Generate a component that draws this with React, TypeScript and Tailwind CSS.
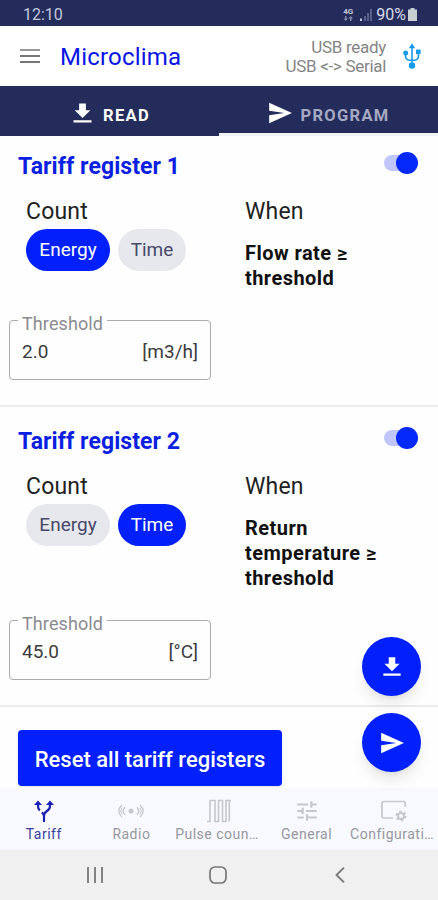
import { useState, type ReactNode } from "react";
import { clsx } from "clsx";

interface Register {
  id: number;
  count: "Energy" | "Time";
  condition: string;
  threshold: string;
  unit: string;
  enabled: boolean;
}

const initialRegisters: Register[] = [
  { id: 1, count: "Energy", condition: "Flow rate ≥ threshold", threshold: "2.0", unit: "[m3/h]", enabled: true },
  { id: 2, count: "Time", condition: "Return temperature ≥ threshold", threshold: "45.0", unit: "[°C]", enabled: true },
];

const DownloadIcon = ({ className }: { className?: string }) => (
  <svg viewBox="0 0 24 24" fill="currentColor" className={className}>
    <path d="M19 9h-4V3H9v6H5l7 7 7-7zM4 18v2h16v-2H4z" />
  </svg>
);

const SendIcon = ({ className }: { className?: string }) => (
  <svg viewBox="0 0 24 24" fill="currentColor" className={className}>
    <path d="M2 21.500l21-9.500L2 2.500v7.500l14 2-14 2v7.500z" />
  </svg>
);

const UsbIcon = () => (
  <svg viewBox="0 0 18 26" className="h-[26px] w-[18px] shrink-0 text-[#159bea]" fill="none" stroke="currentColor" strokeWidth="1.600">
    <path d="M9 4v18M2.500 10v2.500Q2.500 17 6.500 17.300H11.500q4-.3 4-4.800V9" />
    <path d="M9 .3l3.200 5H5.800z" fill="currentColor" stroke="none" />
    <circle cx="9" cy="22.500" r="3.200" fill="currentColor" stroke="none" />
    <circle cx="2.700" cy="10" r="2.500" fill="currentColor" stroke="none" />
    <path d="M13 6.500h4.600v4.500H13z" fill="currentColor" stroke="none" />
  </svg>
);

const TariffIcon = () => (
  <svg viewBox="0 0 20 24" className="h-6 w-5" fill="none" stroke="currentColor" strokeWidth="2.200">
    <path d="M10 23v-6.500q0-2.500 3-4.500t3-5V4M10 17q0-2-2.200-3.700M5.800 11.500Q4 9.700 4 7V4" />
    <path d="M4 1.500L8 6H0zM16 1.500L20 6h-8z" fill="currentColor" stroke="none" />
  </svg>
);

const RadioIcon = () => (
  <svg viewBox="0 0 26 14" className="h-3.5 w-[26px]" fill="none" stroke="currentColor" strokeWidth="1.300">
    <path d="M4 1Q-2.500 7 4 13M7 3.300Q3.500 7 7 10.700M22 1q6.500 6 0 12M19 3.300q3.500 3.700 0 7.400" />
    <path d="M4 3.500Q1.500 7 4 10.500M22 3.500q2.500 3.500 0 7" strokeWidth="1" />
    <circle cx="13" cy="7" r="2.500" fill="currentColor" stroke="none" />
  </svg>
);

const PulseIcon = () => (
  <svg viewBox="0 0 24 24" className="h-6 w-6" fill="none" stroke="currentColor" strokeWidth="1.600">
    <path d="M0 22.500h3V1.500h5v21h3.500V1.500h4v21h3.500V1.500h5" />
    <path d="M22.300 1.500v21" />
  </svg>
);

const TuneIcon = () => (
  <svg viewBox="0 0 24 24" className="h-[26px] w-[26px]" fill="currentColor">
    <path d="M3 17v2h6v-2H3zM3 5v2h10V5H3zm10 16v-2h8v-2h-8v-2h-2v6h2zM7 9v2H3v2h4v2h2V9H7zm14 4v-2H11v2h10zm-6-4h2V7h4V5h-4V3h-2v6z" />
  </svg>
);

const ConfigIcon = () => (
  <svg viewBox="0 0 26 22" className="h-[22px] w-[26px]" fill="none" stroke="currentColor" strokeWidth="1.700">
    <path d="M24.200 7V3q0-1.500-1.500-1.500H2.500Q1 1.500 1 3v13.500Q1 18 2.500 18H12" />
    <circle cx="20" cy="16" r="3" strokeWidth="2" />
    <circle cx="20" cy="16" r="4.600" strokeWidth="1.800" strokeDasharray="2.400 2.417" />
  </svg>
);

const navItems: { label: string; icon: ReactNode }[] = [
  { label: "Tariff", icon: <TariffIcon /> },
  { label: "Radio", icon: <RadioIcon /> },
  { label: "Pulse coun…", icon: <PulseIcon /> },
  { label: "General", icon: <TuneIcon /> },
  { label: "Configurati…", icon: <ConfigIcon /> },
];

function Toggle({ on, onClick }: { on: boolean; onClick: () => void }) {
  return (
    <button onClick={onClick} className={clsx("flex h-[22px] w-[34px] items-center", on ? "justify-end" : "justify-start")}>
      <span className={clsx("h-4 w-[30px] rounded-full", on ? "bg-[#c0c6fa]" : "bg-gray-300")} />
      <span className={clsx("h-[22px] w-[22px] shrink-0 rounded-full", on ? "-ml-[18px] bg-[#0429fa]" : "-ml-[30px] bg-gray-100")} />
    </button>
  );
}

function Chip({ label, active, onClick }: { label: string; active: boolean; onClick: () => void }) {
  return (
    <button
      onClick={onClick}
      className={clsx(
        "flex h-[42px] items-center justify-center rounded-full text-[19px]",
        label === "Energy" ? "w-[84px]" : "w-[68px]",
        active ? "bg-[#0120fc] text-white" : "bg-[#e7e8ee] text-[#474869]"
      )}
    >
      {label}
    </button>
  );
}

function RegisterSection({ register, onChange }: { register: Register; onChange: (r: Register) => void }) {
  return (
    <section
      className={clsx(
        "flex shrink-0 flex-col border-b-2 border-[#ececec]",
        register.id === 1 ? "h-[271px] pt-4" : "h-[300px] pt-5"
      )}
    >
      <div className="flex items-start justify-between pr-5 pl-[18px]">
        <h2 className="pt-px text-[23px] leading-7 font-bold tracking-[0.080px] text-[#0a1fe0]">Tariff register {register.id}</h2>
        <Toggle on={register.enabled} onClick={() => onChange({ ...register, enabled: !register.enabled })} />
      </div>
      <div className="mt-[15px] flex">
        <div className="w-[219px] pl-[26px]">
          <div className="text-[23px] leading-8 tracking-[0.200px] text-[#222]">Count</div>
          <div className="mt-px flex gap-2">
            {(["Energy", "Time"] as const).map((c) => (
              <Chip key={c} label={c} active={register.count === c} onClick={() => onChange({ ...register, count: c })} />
            ))}
          </div>
        </div>
        <div className="flex-1 pr-12 pl-[26px]">
          <div className="text-[23px] leading-8 tracking-[0.200px] text-[#222]">When</div>
          <p className="mt-[13px] text-[20px] leading-[25px] font-bold tracking-[0.450px] text-[#111]">{register.condition}</p>
        </div>
      </div>
      <fieldset className="mt-auto mb-[25px] ml-[9px] h-[69px] w-[202px] rounded-[4px] border-[1.500px] border-[#aaa] pr-3 pl-2">
        <legend className="px-1 text-[18px] leading-[18px] tracking-[0.100px] text-[#8b8b90]">
          <span className="relative top-1">Threshold</span>
        </legend>
        <div className="flex justify-between pt-1 pl-1 text-[19px] leading-[38px] text-[#3c3c3c]">
          <span>{register.threshold}</span>
          <span>{register.unit}</span>
        </div>
      </fieldset>
    </section>
  );
}

export default function App() {
  const [registers, setRegisters] = useState(initialRegisters);
  const [activeNav, setActiveNav] = useState("Tariff");

  const updateRegister = (next: Register) => setRegisters(registers.map((r) => (r.id === next.id ? next : r)));

  return (
    <div className="relative flex h-[900px] w-[438px] flex-col overflow-hidden bg-[#fefefe] font-[Roboto,sans-serif]">
      {/* Status bar */}
      <div className="flex h-[26px] shrink-0 items-center justify-between bg-[#242c5c] pt-[3px] pr-[21px] pl-[23px] text-[16px] text-[#c3c7dc]">
        <span>12:10</span>
        <div className="flex items-center gap-1">
          <div className="mr-0.5 flex w-3 flex-col items-center text-[8px] leading-[8px] font-bold">
            <span>4G</span>
            <svg viewBox="0 0 10 5" className="h-[5px] w-2.5" fill="#858aaa">
              <path d="M2 0h1.500v2.500H5L2.700 5 .5 2.500H2zM7 5h1.500V2.500H10L7.700 0 5.500 2.500H7z" />
            </svg>
          </div>
          <svg viewBox="0 0 12 12" className="h-3 w-3">
            <path d="M0 9.500h2V12H0z" fill="#c3c7dc" />
            <path d="M4 7h2v5H4zM7 4h2v8H7zM10 0h2v12h-2z" fill="#5a6087" />
          </svg>
          <span className="text-[#d8dbea]">90%</span>
          <svg viewBox="0 0 9 13" className="-ml-0.5 h-[13px] w-[9px]" fill="#c9d0d2">
            <path d="M2.500 0h4v1.500H9V13H0V1.500h2.500z" />
          </svg>
        </div>
      </div>

      {/* Header */}
      <header className="flex h-[60px] shrink-0 items-center bg-white pr-[17px] pl-5">
        <button className="flex w-5 flex-col gap-1">
          <span className="h-0.5 bg-[#999]" />
          <span className="h-0.5 bg-[#777]" />
          <span className="h-0.5 bg-[#777]" />
        </button>
        <h1 className="ml-5 pt-0.5 text-[24px] tracking-[0.200px] text-[#0a16e2]">Microclima</h1>
        <div className="mr-[17px] ml-auto pt-0.5 text-right text-[17px] leading-[19px] tracking-[-0.300px] text-[#858585]">
          <div>USB ready</div>
          <div>USB &lt;-&gt; Serial</div>
        </div>
        <UsbIcon />
      </header>

      {/* Actions */}
      <div className="flex h-[50px] shrink-0 bg-[#242c5c] text-[16.500px] font-bold tracking-[1.300px]">
        <button className="flex w-[219px] items-center justify-center pt-2.5 text-white">
          <DownloadIcon className="-mt-1.5 mr-[7px] h-[27px] w-[27px]" />
          READ
        </button>
        <button className="flex w-[219px] items-center justify-center border-b-[3px] border-[#f3f3f6] pt-[13px] text-[#a5a9c2]">
          <SendIcon className="-mt-1.5 mr-[7px] h-[26px] w-[26px] text-white" />
          PROGRAM
        </button>
      </div>

      {/* Registers */}
      <main className="flex min-h-0 flex-1 flex-col">
        {registers.map((r) => (
          <RegisterSection key={r.id} register={r} onChange={updateRegister} />
        ))}
        <button
          onClick={() => setRegisters(initialRegisters)}
          className="mt-[23px] ml-[18px] h-14 w-[264px] shrink-0 rounded-[4px] bg-[#0120fc] pt-0.5 text-[22px] font-medium text-white shadow"
        >
          Reset all tariff registers
        </button>
      </main>

      {/* Floating actions */}
      <div className="absolute top-[637px] right-[17px] flex flex-col gap-[17px] text-white">
        <button className="flex h-[59px] w-[59px] items-center justify-center rounded-full bg-[#0120fc] shadow-lg">
          <DownloadIcon className="h-[26px] w-[26px]" />
        </button>
        <button className="flex h-[59px] w-[59px] items-center justify-center rounded-full bg-[#0120fc] shadow-lg">
          <SendIcon className="h-[26px] w-[26px]" />
        </button>
      </div>

      {/* Bottom navigation */}
      <nav className="flex h-[62px] shrink-0 bg-[#f8f9fe]">
        {navItems.map(({ label, icon }) => (
          <button
            key={label}
            onClick={() => setActiveNav(label)}
            className={clsx("flex w-1/5 flex-col items-center pt-[11px]", activeNav === label ? "text-[#1a20b4]" : "text-[#c6c7cc]")}
          >
            <span className="flex h-6 items-center">{icon}</span>
            <span className={clsx("text-[14px] leading-[22px] tracking-[0.500px] whitespace-nowrap", label.endsWith("…") && "-ml-1", activeNav === label ? "text-[#3940a0]" : "text-[#96979d]")}>
              {label}
            </span>
          </button>
        ))}
      </nav>

      {/* System navigation */}
      <div className="flex h-[50px] shrink-0 items-center bg-[#f0f0f0] pr-[93px] pl-[87px] text-[#777]">
        <svg viewBox="0 0 16 16" className="h-4 w-4" stroke="currentColor" strokeWidth="1.800">
          <path d="M1 0v16M8 0v16M15 0v16" />
        </svg>
        <svg viewBox="0 0 18 18" className="mr-auto ml-[106px] h-[18px] w-[18px]" fill="none" stroke="currentColor" strokeWidth="1.700">
          <rect x="1" y="1" width="16" height="16" rx="5" />
        </svg>
        <svg viewBox="0 0 10 16" className="h-4 w-2.5" fill="none" stroke="currentColor" strokeWidth="1.800">
          <path d="M9 .7L1.500 8 9 15.300" />
        </svg>
      </div>
    </div>
  );
}
